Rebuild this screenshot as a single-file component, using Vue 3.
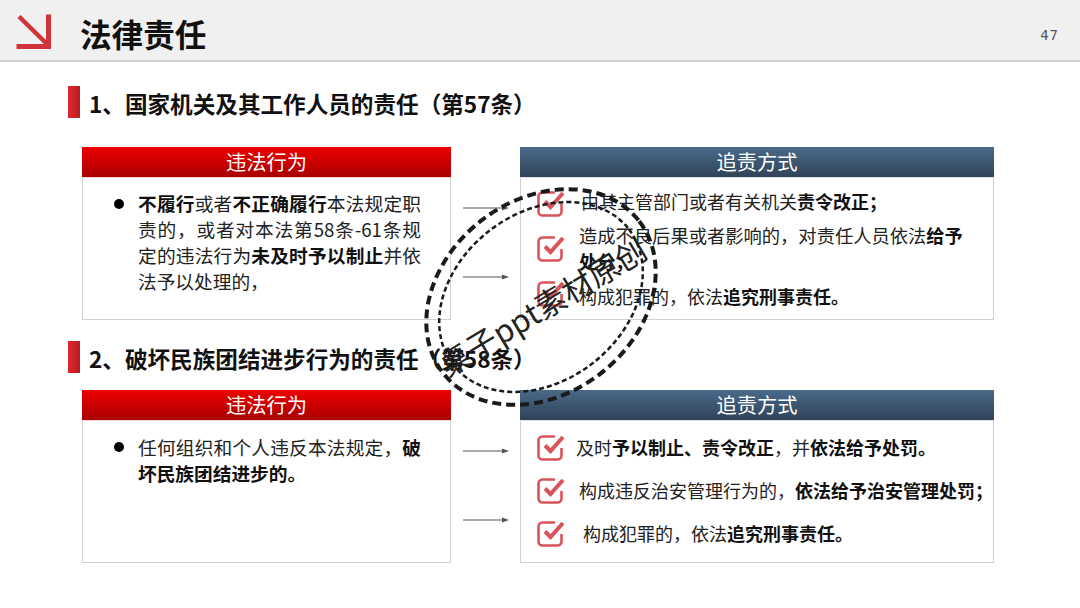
<script setup>
const sections = [
  {
    title: '1、国家机关及其工作人员的责任（第57条）',
    cls: 'first',
    left: [
      { b: '不履行' }, { t: '或者' }, { b: '不正确履行' }, { t: '本法规定职责的，或者对本法第58条-61条规定的违法行为' }, { b: '未及时予以制止' }, { t: '并依法予以处理的，' },
    ],
    rows: [
      { parts: [{ t: '由其主管部门或者有关机关' }, { b: '责令改正；' }], x: 16, fs: 18 },
      { parts: [{ t: '造成不良后果或者影响的，对责任人员依法' }, { b: '给予处分；' }], x: 14, fs: 18.3 },
      { parts: [{ t: '构成犯罪的，依法' }, { b: '追究刑事责任。' }], x: 14, fs: 18 },
    ],
  },
  {
    title: '2、破坏民族团结进步行为的责任（第58条）',
    cls: 'second',
    left: [{ t: '任何组织和个人违反本法规定，' }, { b: '破坏民族团结进步的。' }],
    rows: [
      { parts: [{ t: '及时' }, { b: '予以制止、责令改正' }, { t: '，并' }, { b: '依法给予处罚。' }], x: 11, fs: 18 },
      { parts: [{ t: '构成违反治安管理行为的，' }, { b: '依法给予治安管理处罚；' }], x: 14, fs: 18 },
      { parts: [{ t: '构成犯罪的，依法' }, { b: '追究刑事责任。' }], x: 18, fs: 18 },
    ],
  },
]
</script>

<template>
  <div class="slide">
    <header class="top">
      <svg class="logo" width="36" height="36" viewBox="0 0 36 36">
        <path d="M32.500 0.500V32.500H0.500" fill="none" stroke="#d0343a" stroke-width="5" />
        <path d="M3 2.500L32 31" fill="none" stroke="#d0343a" stroke-width="4.500" />
      </svg>
      <h1>法律责任</h1>
      <span class="page">47</span>
    </header>

    <section v-for="s in sections" :key="s.title" class="sec" :class="s.cls">
      <div class="sec-title"><i class="mark"></i><h2>{{ s.title }}</h2></div>
      <div class="cols">
        <div class="card left">
          <div class="head red">违法行为</div>
          <div class="left-body">
            <i class="dot"></i>
            <p><template v-for="(p, i) in s.left" :key="i"><b v-if="p.b">{{ p.b }}</b><template v-else>{{ p.t }}</template></template></p>
          </div>
        </div>
        <div class="arrows">
          <svg v-for="n in 2" :key="n" width="46" height="8" viewBox="0 0 46 8">
            <path d="M0 4H40" stroke="#555" stroke-width="1" />
            <path d="M39 1.500L46 4L39 6.500Z" fill="#555" />
          </svg>
        </div>
        <div class="card right">
          <div class="head blue">追责方式</div>
          <ul class="list">
            <li v-for="(r, i) in s.rows" :key="i">
              <svg class="check" width="28" height="27" viewBox="0 0 28 27">
                <path d="M18 2.500H5.500a4 4 0 0 0-4 4V21.500a4 4 0 0 0 4 4H20.500a4 4 0 0 0 4-4V14" fill="none" stroke="#d9545a" stroke-width="2.600" />
                <path d="M8 11.500L13.500 17L26 3" fill="none" stroke="#d9545a" stroke-width="4" />
              </svg>
              <span class="txt" :style="{ marginLeft: r.x + 'px', fontSize: r.fs + 'px' }"><template v-for="(p, j) in r.parts" :key="j"><b v-if="p.b">{{ p.b }}</b><template v-else>{{ p.t }}</template></template></span>
            </li>
          </ul>
        </div>
      </div>
    </section>

    <div class="stamp">
      <svg width="280" height="260" viewBox="0 0 280 260">
        <g transform="rotate(-37.6 140 130)" fill="none" stroke="#1a1a1a">
          <ellipse cx="140" cy="130" rx="124" ry="97" stroke-width="4" stroke-dasharray="9 5" />
          <ellipse cx="140" cy="130" rx="111" ry="84" stroke-width="2.500" stroke-dasharray="5 3" />
        </g>
      </svg>
      <span class="stamp-text">桌子ppt素材原创</span>
    </div>
  </div>
</template>

<style>
html, body { margin: 0; background: #fff; }
</style>

<style scoped>
.slide {
  position: relative;
  width: 1080px;
  height: 608px;
  overflow: hidden;
  background: #fff;
  color: #1a1a1a;
  font-family: "Noto Sans CJK SC", "Noto Sans", sans-serif;
}
.top {
  box-sizing: border-box;
  height: 62px;
  background: #f0f0f0;
  border-bottom: 2px solid #cfcfcf;
  display: flex;
  align-items: center;
  padding: 8px 0 0 16px;
}
.logo { flex: none; margin-top: -4px; }
h1 {
  margin: -2px 0 0 28px;
  font-size: 31.6px;
  font-weight: 700;
  line-height: 40px;
  color: #111;
}
.page {
  margin-left: auto;
  margin-right: 21px;
  margin-top: 1px;
  font-size: 14px;
  letter-spacing: 1px;
  color: #555;
  font-family: "DejaVu Sans Mono", monospace;
}
.sec { padding-left: 68px; }
.first { margin-top: 24px; }
.second { margin-top: 21px; }
.sec-title { display: flex; align-items: center; height: 32px; }
.mark {
  width: 12px;
  height: 32px;
  background: linear-gradient(90deg, #e0262c, #b81c22);
}
h2 {
  margin: 3px 0 0 9px;
  font-size: 22.6px;
  font-weight: 700;
  line-height: 32px;
  color: #111;
  white-space: nowrap;
}
.cols { display: flex; margin-left: 14px; }
.first .cols { margin-top: 29px; }
.second .cols { margin-top: 17px; }
.card {
  box-sizing: border-box;
  height: 173px;
  border: 1px solid #d0d0d0;
  border-top: 0;
  display: flex;
  flex-direction: column;
}
.left { width: 369px; }
.right { width: 474px; }
.head {
  height: 30px;
  margin: 0 -1px;
  flex: none;
  text-align: center;
  color: #fff;
  font-size: 20.3px;
  line-height: 28px;
}
.red { background: linear-gradient(180deg, #ee0000, #a80000); box-shadow: 0 1px 0 #f6d4d4; }
.blue { background: linear-gradient(180deg, #4a6a8a, #2f4358); box-shadow: 0 1px 0 #dfe3ee; }
.left-body { position: relative; padding: 13px 29px 0 55px; }
.second .left-body { padding-top: 14px; }
.dot {
  position: absolute;
  left: 31px;
  top: 22px;
  width: 10px;
  height: 10px;
  border-radius: 50%;
  background: #000;
}
p {
  margin: 0;
  font-size: 18.7px;
  line-height: 26px;
  color: #222;
  text-align: justify;
}
b { font-weight: 700; color: #111; }
.arrows {
  width: 69px;
  flex: none;
  display: flex;
  flex-direction: column;
  align-items: center;
  gap: 61px;
  padding-top: 57px;
}
.list {
  list-style: none;
  margin: 0;
  display: flex;
  flex-direction: column;
}
.list li { display: flex; align-items: center; }
.check { flex: none; }
.txt { line-height: 26px; color: #222; }
.first .list { padding: 10px 16px 0 16px; gap: 3px; }
.first .list li { min-height: 32px; }
.first .list li:first-child .txt { margin-bottom: 4px; }
.first .list li:last-child .txt { margin-top: 5px; }
.second .list { padding: 11px 0 0 16px; gap: 11px; }
.second .list li { min-height: 32px; }
.second .txt { white-space: nowrap; }
.stamp {
  position: absolute;
  left: 401px;
  top: 167px;
  width: 280px;
  height: 260px;
  pointer-events: none;
}
.stamp-text {
  position: absolute;
  left: 141px;
  top: 139px;
  transform: translate(-50%, -50%) rotate(-31deg);
  white-space: nowrap;
  font-size: 31px;
  line-height: 36px;
  color: #222;
}
</style>
